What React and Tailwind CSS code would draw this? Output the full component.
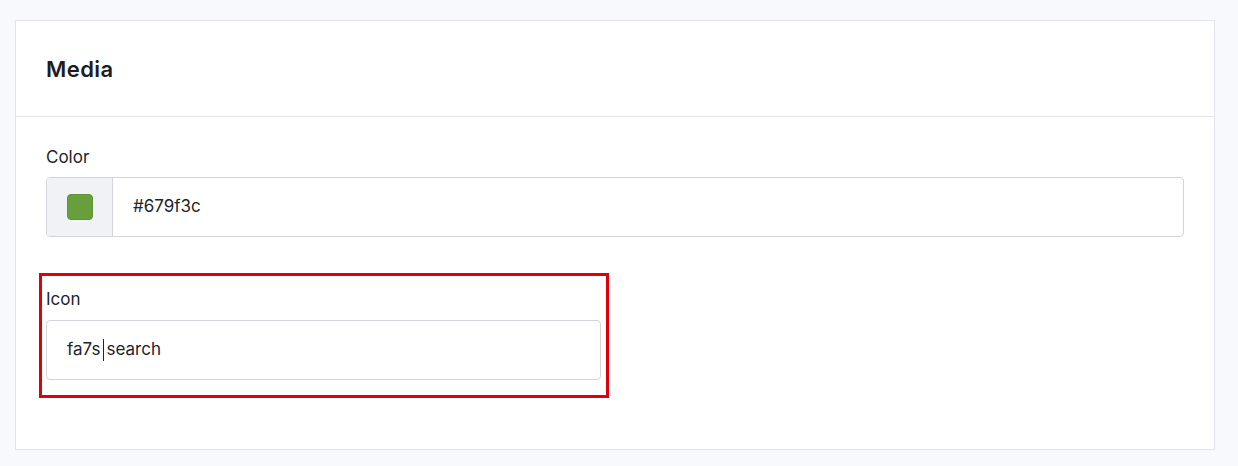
import React from 'react';

function App() {
    return (
        <div className="min-h-[466px] bg-[#f8f9fd] pt-[20px] pl-[15px] pr-[23px] pb-[15px]" style={{ fontFamily: 'Inter, "Noto Sans", sans-serif' }}>
            <div className="bg-white border border-[#e3e5ea] text-[#212529]">
                {/* cabecera */}
                <div className="h-[96px] flex items-center px-[30px] border-b border-[#e3e5ea]">
                    <h2 className="text-[22px] font-semibold leading-none tracking-[0.02em] text-[#1a1d23]">Media</h2>
                </div>
                <div className="px-[30px] pt-[28px] pb-[69px]">
                    <label className="block text-[17px] leading-[24px] mb-[8px]">Color</label>
                    <div className="flex h-[60px] border border-[#d3d5da] rounded-[4px] overflow-hidden">
                        <div className="w-[66px] bg-[#f1f2f6] border-r border-[#d3d5da] flex items-center justify-center">
                            <div className="w-[26px] h-[26px] rounded-[4px] bg-[#679f3c] border border-[#5f9438]"></div>
                        </div>
                        <div className="flex-1 flex items-center pl-[20px] text-[17px]">#679f3c</div>
                    </div>

                    <div className="relative w-[555px] mt-[50px]">
                        {/* marco rojo de anotación */}
                        <div className="absolute left-[-7px] right-[-8px] top-[-14px] bottom-[-18px] border-[3px] border-[#e0000b] pointer-events-none"></div>
                        <label className="block text-[17px] leading-[24px] mb-[9px]">Icon</label>
                        <div className="h-[60px] border border-[#d3d5da] rounded-[4px] flex items-center pl-[20px] text-[17px]">
                            <span>fa7s</span>
                            <span className="inline-block w-[1px] h-[22px] bg-[#212529] ml-[2px] mr-[3px]"></span>
                            <span>search</span>
                        </div>
                    </div>
                </div>
            </div>
        </div>
    );
}

export default App;
